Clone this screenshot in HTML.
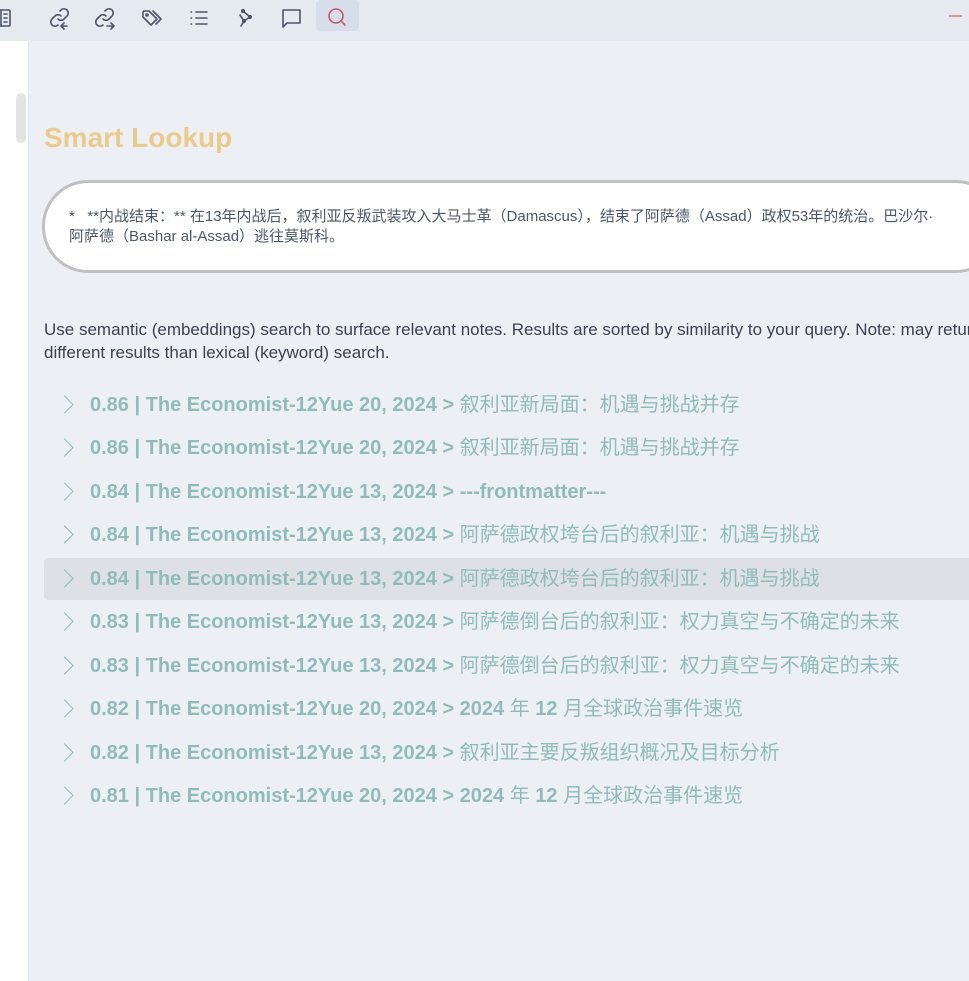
<!DOCTYPE html>
<html><head><meta charset="utf-8"><style>
*{margin:0;padding:0;box-sizing:border-box}
body{width:969px;height:981px;overflow:hidden;background:#eceff4;font-family:"Liberation Sans","Noto Sans CJK SC",sans-serif;position:relative}
.tb{position:absolute;left:0;top:0;width:969px;height:41px;background:#e5e9f0}
.ic{position:absolute;top:4px;width:28px;height:28px}
.ic svg{width:28px;height:28px;fill:none;stroke:#4c566a;stroke-width:1.6;stroke-linecap:round;stroke-linejoin:round}
.act{position:absolute;left:316px;top:0;width:43px;height:31px;background:#d8dee9;border-radius:4px}
.left{position:absolute;left:0;top:41px;width:29px;height:940px;background:#fff;border-right:1px solid #e0e3e8}
.sb{position:absolute;left:16px;top:93px;width:10px;height:50px;background:#e3e3e3;border-radius:5px}
h1{position:absolute;left:44px;top:122px;font-size:28px;color:#ebcb8b;font-weight:bold}
.box{position:absolute;left:42px;top:180px;width:960px;height:93px;background:#fff;border:3px solid #c0c0c0;border-radius:46px;padding:24px 0 0 24px;font-size:15px;color:#4c566a;line-height:20px;white-space:nowrap}
.desc{position:absolute;left:44px;top:318px;font-size:17px;color:#3b4252;line-height:23px;white-space:nowrap}
.r{position:absolute;left:44px;width:930px;height:42px;font-size:20px;font-weight:bold;color:#8fbcbb;line-height:42px;padding-left:46px;white-space:nowrap}
.r .c{font-weight:normal}
.r:before{content:"";position:absolute;left:14px;top:14px;width:12px;height:12px;border-right:1.5px solid #8fbcbb;border-top:1.5px solid #8fbcbb;transform:rotate(45deg)}
.hl{background:#dde0e5;border-radius:4px}
</style></head><body>
<div class="tb">
<div class="ic" style="left:-8px"><svg viewBox="0 0 28 28"><rect x="4" y="6" width="14" height="16" rx="1"/><path d="M9 6v16M12 10h3M12 14h3M12 18h3"/></svg></div>
<div class="ic" style="left:47px"><svg viewBox="0 0 28 28"><path d="M11 15a4 4 0 0 0 6 0l3-3a4 4 0 0 0-6-6l-1 1M14 12a4 4 0 0 0-6 0l-3 3a4 4 0 0 0 6 6M20 22h-5M17 19l-3 3 3 3"/></svg></div>
<div class="ic" style="left:92px"><svg viewBox="0 0 28 28"><path d="M11 15a4 4 0 0 0 6 0l3-3a4 4 0 0 0-6-6l-1 1M14 12a4 4 0 0 0-6 0l-3 3a4 4 0 0 0 6 6M15 22h6M19 19l3 3-3 3"/></svg></div>
<div class="ic" style="left:139px"><svg viewBox="0 0 28 28"><path d="M4 8v5l8 8 6-6-8-8H5zM14 7l8 8-5 5"/><circle cx="8" cy="11" r="1"/></svg></div>
<div class="ic" style="left:185px"><svg viewBox="0 0 28 28"><path d="M11 8h11M11 14h11M11 20h11M6 8h.5M6 14h.5M6 20h.5"/></svg></div>
<div class="ic" style="left:232px"><svg viewBox="0 0 28 28"><path d="M11 7l7 6-6 4-3 5M8 11l4 6"/><circle cx="11" cy="7" r="1.3"/><circle cx="18" cy="13" r="1.3"/><circle cx="12" cy="17" r="1.3"/></svg></div>
<div class="ic" style="left:278px"><svg viewBox="0 0 28 28"><path d="M5 6h17v13H9l-4 4z"/></svg></div>
<div class="act"></div>
<div class="ic" style="left:323px"><svg viewBox="0 0 28 28" style="stroke:#bf616a"><circle cx="13" cy="12" r="7"/><path d="M18 17l4 4"/></svg></div>
<div style="position:absolute;left:949px;top:15px;width:13px;height:2px;background:#d08770;opacity:.8"></div>
</div>
<div class="left"></div>
<div class="sb"></div>
<h1>Smart Lookup</h1>
<div class="box">*&nbsp;&nbsp; **内战结束：** 在13年内战后，叙利亚反叛武装攻入大马士革（Damascus），结束了阿萨德（Assad）政权53年的统治。巴沙尔·<br>阿萨德（Bashar al-Assad）逃往莫斯科。</div>
<div class="desc">Use semantic (embeddings) search to surface relevant notes. Results are sorted by similarity to your query. Note: may return<br>different results than lexical (keyword) search.</div>
<div class="r" style="top:384px">0.86 | The Economist-12Yue 20, 2024 &gt; <span class="c">叙利亚新局面：机遇与挑战并存</span></div>
<div class="r" style="top:427px">0.86 | The Economist-12Yue 20, 2024 &gt; <span class="c">叙利亚新局面：机遇与挑战并存</span></div>
<div class="r" style="top:471px">0.84 | The Economist-12Yue 13, 2024 &gt; ---frontmatter---</div>
<div class="r" style="top:514px">0.84 | The Economist-12Yue 13, 2024 &gt; <span class="c">阿萨德政权垮台后的叙利亚：机遇与挑战</span></div>
<div class="r hl" style="top:558px">0.84 | The Economist-12Yue 13, 2024 &gt; <span class="c">阿萨德政权垮台后的叙利亚：机遇与挑战</span></div>
<div class="r" style="top:601px">0.83 | The Economist-12Yue 13, 2024 &gt; <span class="c">阿萨德倒台后的叙利亚：权力真空与不确定的未来</span></div>
<div class="r" style="top:645px">0.83 | The Economist-12Yue 13, 2024 &gt; <span class="c">阿萨德倒台后的叙利亚：权力真空与不确定的未来</span></div>
<div class="r" style="top:688px">0.82 | The Economist-12Yue 20, 2024 &gt; 2024 <span class="c">年</span> 12 <span class="c">月全球政治事件速览</span></div>
<div class="r" style="top:732px">0.82 | The Economist-12Yue 13, 2024 &gt; <span class="c">叙利亚主要反叛组织概况及目标分析</span></div>
<div class="r" style="top:775px">0.81 | The Economist-12Yue 20, 2024 &gt; 2024 <span class="c">年</span> 12 <span class="c">月全球政治事件速览</span></div>
</body></html>
